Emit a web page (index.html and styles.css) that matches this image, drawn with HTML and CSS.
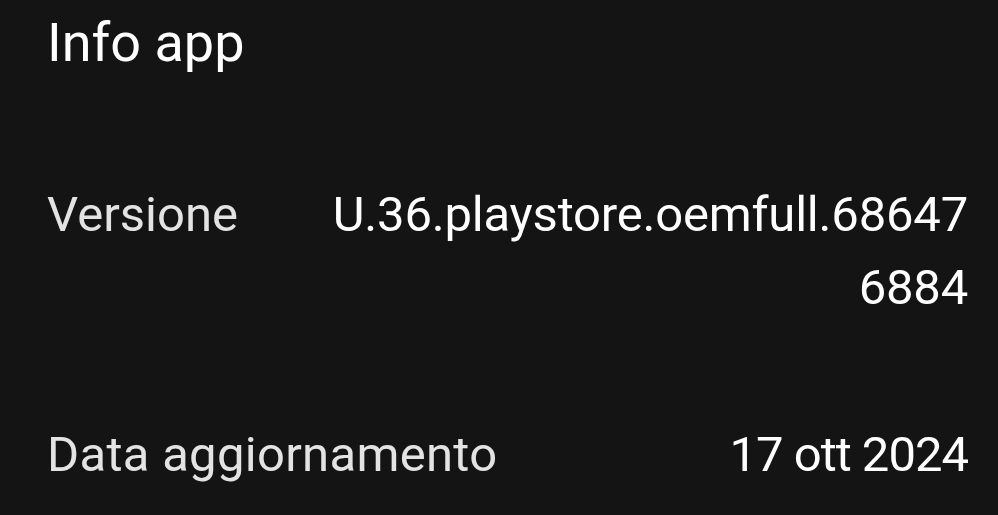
FILE: index.html
```html
<!DOCTYPE html>
<html lang="it">
<head>
    <meta charset="UTF-8">
    <meta name="viewport" content="width=device-width, initial-scale=1.0">
    <title>Info app</title>
    <link rel="stylesheet" href="styles.css">
</head>
<body>
    <div class="pagina">
        <h1 class="titolo">Info app</h1>
        <div class="riga riga-versione">
            <span class="etichetta">Versione</span>
            <span class="valore valore-lungo">U.36.playstore.oemfull.686476884</span>
        </div>
        <div class="riga riga-data">
            <span class="etichetta">Data aggiornamento</span>
            <span class="valore valore-data">17 ott 2024</span>
        </div>
    </div>
</body>
</html>
```

FILE: styles.css
```css
html, body {
    margin: 0;
    padding: 0;
    background: #141414;
    height: 100%;
    overflow: hidden;
}
body {
    font-family: Roboto, "Liberation Sans", sans-serif;
    color: #fff;
}
.pagina {
    padding: 0 30px 0 47px;
}
.titolo {
    margin: 0;
    padding-top: 8px;
    font-size: 54px;
    font-weight: 400;
    line-height: 70px;
    color: #fff;
}
.riga {
    display: flex;
    justify-content: space-between;
    align-items: flex-start;
    font-size: 49px;
    line-height: 73px;
}
.riga-versione {
    margin-top: 100px;
}
.riga-data {
    margin-top: 94px;
}
.etichetta {
    color: #e3e3e3;
    flex-shrink: 0;
}
.riga-data .etichetta {
    letter-spacing: 0.3px;
}
.valore {
    color: #fff;
    text-align: right;
}
.valore-lungo {
    width: 650px;
    word-break: break-all;
    letter-spacing: -0.2px;
}
.valore-data {
    letter-spacing: -1px;
}
```
